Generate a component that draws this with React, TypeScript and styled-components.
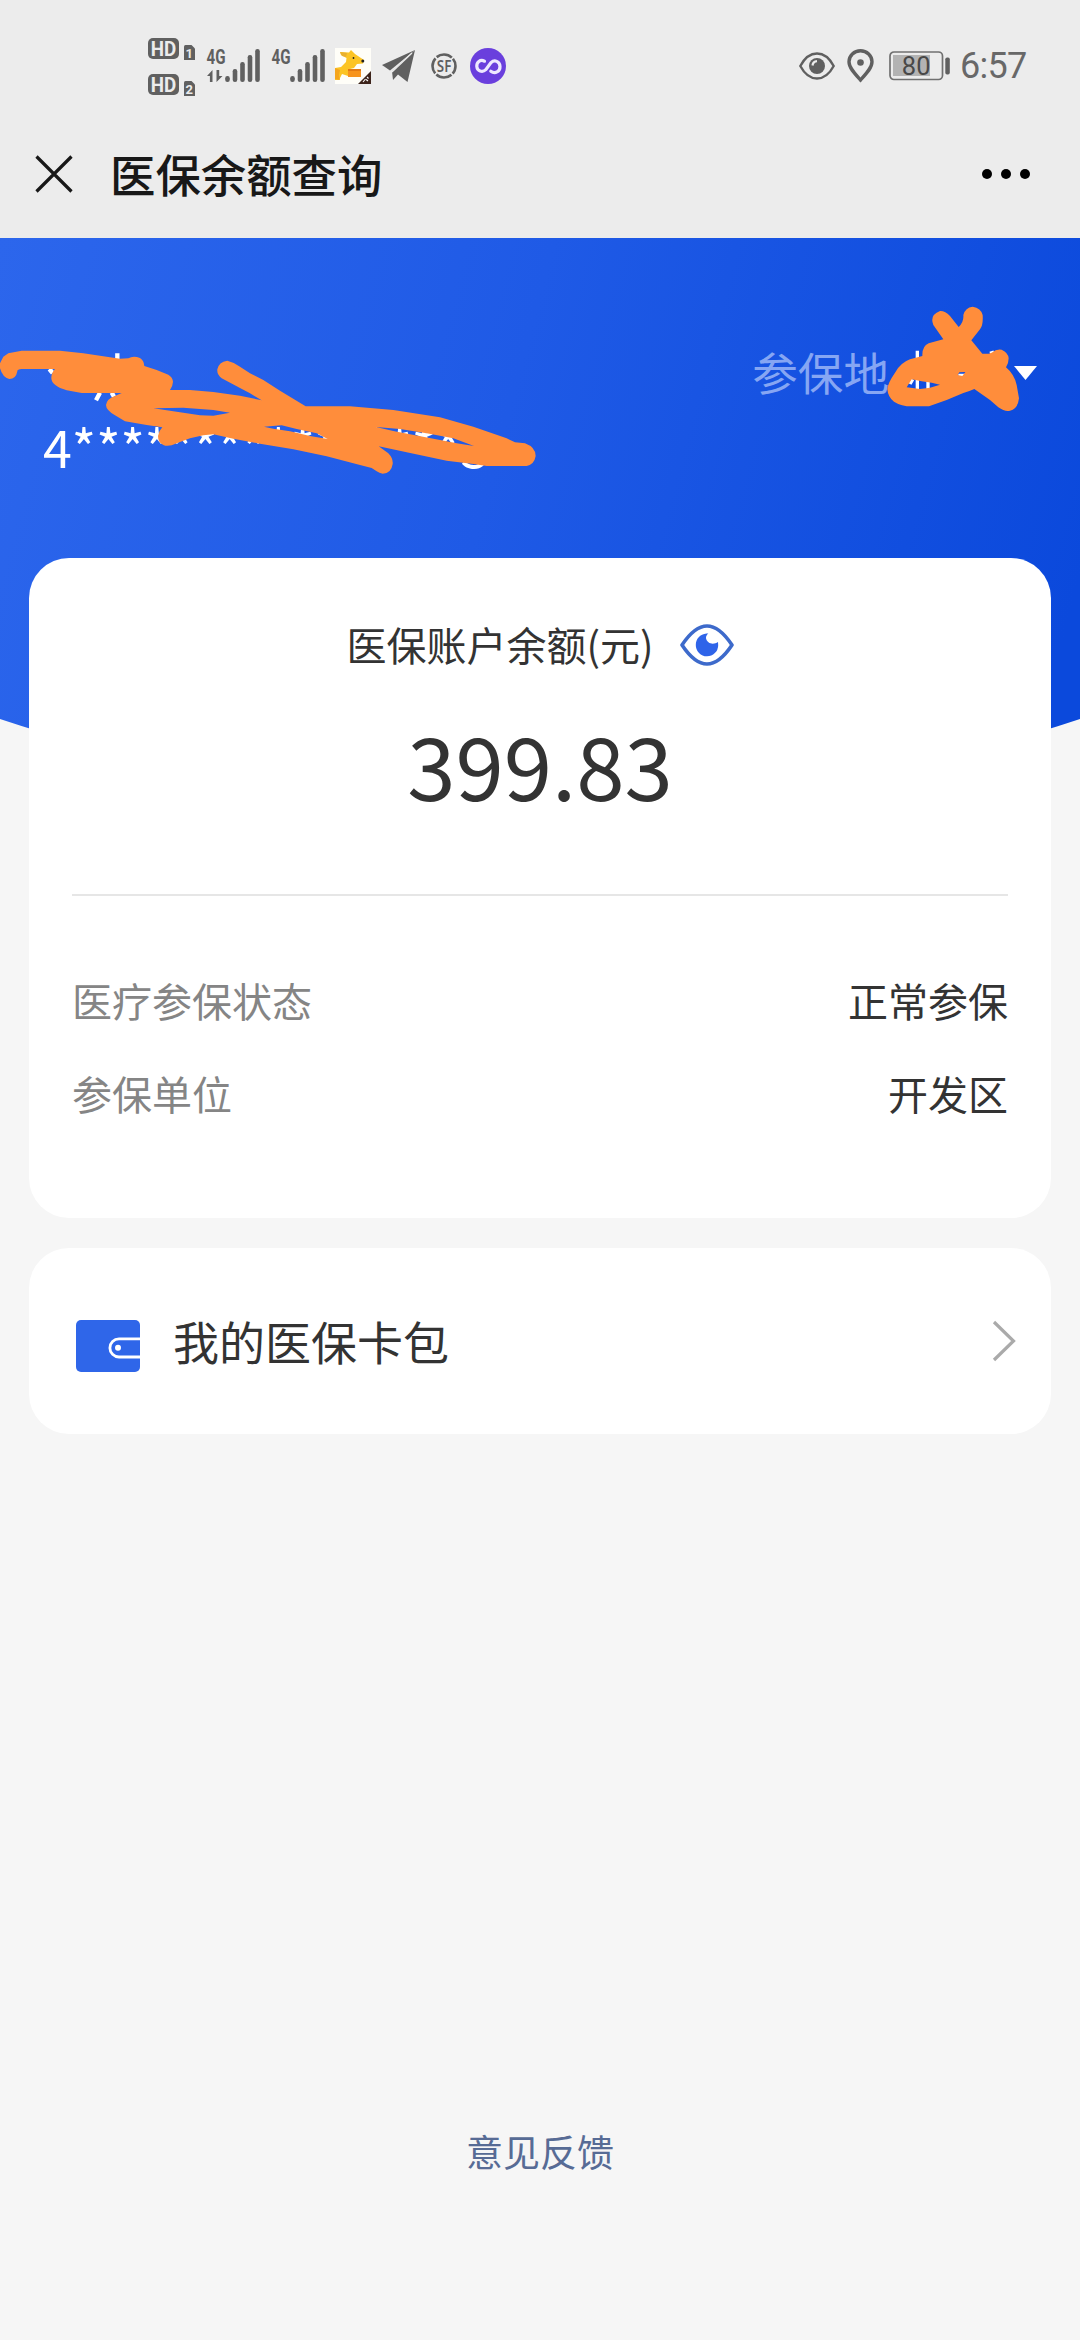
import React from "react";
import styled, { createGlobalStyle } from "styled-components";

const GlobalStyle = createGlobalStyle`
  * { box-sizing: border-box; }
  body {
    margin: 0;
    background: #f6f6f6;
    font-family: "Noto Sans CJK SC", "Noto Sans", sans-serif;
    color: #333;
  }
  svg { display: block; flex: none; }
`;

const Page = styled.div`
  width: 1080px;
  height: 2340px;
  display: flex;
  flex-direction: column;
  overflow: hidden;
  background: #f6f6f6;
`;

const StatusBar = styled.div`
  height: 132px;
  padding: 0 52px 0 148px;
  display: flex;
  align-items: center;
  justify-content: space-between;
  background: #ececec;
  color: #606060;
`;

const StatusGroup = styled.div<{ $gap: number }>`
  display: flex;
  align-items: center;
  gap: ${(p) => p.$gap}px;
`;

const Clock = styled.span`
  width: 68px;
  margin-left: -2px;
  font: 400 36px/72px Roboto, sans-serif;
  letter-spacing: -0.7px;
  color: #686868;
`;

const NavBar = styled.header`
  height: 106px;
  padding: 0 49px 20px 35px;
  display: flex;
  align-items: center;
  background: #ececec;
`;

const NavTitle = styled.h1`
  flex: 1;
  margin: 0 0 0 37px;
  padding-bottom: 5px;
  font-size: 45.4px;
  font-weight: 500;
  line-height: 60px;
  color: #181818;
`;

const Hero = styled.section`
  position: relative;
  height: 570px;
  margin-bottom: -250px;
  padding: 105px 43px 0;
  display: flex;
  justify-content: space-between;
  background: linear-gradient(105deg, #2c66ec 0%, #1f5ae6 45%, #0b49dc 95%);
  clip-path: circle(1708px at 540px -1139.5px);
  color: #fff;
`;

const IdNumber = styled.div`
  padding-top: 73px;
  font-size: 52px;
  line-height: 60px;
`;

const Region = styled.div`
  display: flex;
  align-items: center;
  gap: 125px;
  height: 60px;
  font-size: 45.6px;
  color: #86a6f3;
`;

const RegionLabel = styled.span`
  line-height: 60px;
  padding-bottom: 5px;
`;

const Overlay = styled.svg<{ $x: number; $y: number }>`
  position: absolute;
  left: ${(p) => p.$x}px;
  top: ${(p) => p.$y}px;
`;

const Cards = styled.main`
  position: relative;
  display: flex;
  flex-direction: column;
  gap: 30px;
  padding: 0 29px;
`;

const Card = styled.section`
  background: #fff;
  border-radius: 40px;
`;

const BalanceCard = styled(Card)`
  height: 660px;
  padding: 57px 43px 0;
`;

const BalanceLabel = styled.div`
  display: flex;
  justify-content: center;
  align-items: center;
  gap: 26px;
  height: 60px;
  font-size: 40px;
`;

const LabelText = styled.span`
  line-height: 58px;
  padding-bottom: 2px;
`;

const Amount = styled.div`
  height: 221px;
  padding-top: 28px;
  text-align: center;
  font-size: 87px;
  line-height: 120px;
  border-bottom: 2px solid #e6e6e6;
`;

const Details = styled.dl`
  margin: 0;
  padding-top: 57px;
`;

const DetailRow = styled.div`
  display: flex;
  align-items: center;
  justify-content: space-between;
  height: 93px;
  font-size: 40px;
`;

const Term = styled.dt`
  color: #858585;
`;

const Value = styled.dd`
  margin: 0;
`;

const WalletCard = styled(Card)`
  height: 186px;
  padding: 0 35px 0 47px;
  display: flex;
  align-items: center;
`;

const WalletTitle = styled.span`
  flex: 1;
  margin-left: 33px;
  padding-bottom: 3px;
  font-size: 46px;
`;

const Feedback = styled.a`
  margin-top: auto;
  padding-bottom: 159px;
  text-align: center;
  font-size: 37px;
  line-height: 60px;
  color: #576b95;
`;

const HdBadges = () => (
  <svg width="48" height="72" viewBox="148 30 48 72">
    {[38, 74].map((y, i) => (
      <g key={y}>
        <rect x="148" y={y} width="31" height="21" rx="5" fill="#606060" />
        <text x="150.8" y={y + 17.6} fontFamily="Roboto" fontWeight="700" fontSize="19.5" textLength="25.5" lengthAdjust="spacingAndGlyphs" fill="#ececec">HD</text>
        <path d={`M185.500 ${y + 7}h6l3.500 3.500v11.500h-11v-13.500q0-1.500 1.500-1.500z`} fill="#606060" />
        <text x="189.300" y={y + 19.500} textAnchor="middle" fontFamily="Roboto" fontWeight="700" fontSize="13" fill="#ececec">{i + 1}</text>
      </g>
    ))}
  </svg>
);

const Signal = ({ data }: { data?: boolean }) => (
  <svg width={data ? 54 : 52} height="72" viewBox={`207 30 ${data ? 54 : 52} 72`} fill="#606060" overflow="visible">
    <text x="206.500" y="64" fontFamily="Roboto" fontWeight="700" fontSize="20.500" textLength="19" lengthAdjust="spacingAndGlyphs">4G</text>
    {data && <path d="M212.500 70v12h-2.600v-6h-2.900zM216.500 70v12l6-6h-3.300v-6z" />}
    {[76, 69, 62, 55, 49].map((y, i) => (
      <rect key={y} x={225.200 + i * 7.500} y={y} width="4.600" height={82 - y} rx="2.200" />
    ))}
  </svg>
);

const DogIcon = () => (
  <svg width="36" height="36" viewBox="0 0 36 36">
    <rect width="36" height="36" fill="#fffef8" />
    <path d="M5 4l9 .5L16 2l4 4 9 6-1 3.500-6 .5-3 4-4 1-2 7-6-2-3 6H0V20l6-1 5-5 .5-4L6 7z" fill="#fcc424" />
    <path d="M0 20l5 2-1 5 1 5-5-1z" fill="#f5a51d" />
    <path d="M5 4l7 1-1 4-4-1z" fill="#e8b030" />
    <rect x="13" y="21" width="13" height="8" fill="#f7941d" />
    <path d="M13 21h13v2H13z" fill="#e27a13" />
    <circle cx="18.500" cy="10" r=".9" fill="#222" />
    <circle cx="27.800" cy="13" r="1.500" fill="#222" />
    <path d="M36 23v13H23z" fill="#3d241b" />
    <path d="M28 34l2.500-3M31 31.500l2 1.500M32 29l1.500 1.500" stroke="#fff" strokeWidth="1.100" />
  </svg>
);

const PlaneIcon = () => (
  <svg width="33" height="32" viewBox="0 0 33 32" fill="#606060">
    <path d="M33 0L0 15l8 5.500z" />
    <path d="M33 0L10 21.500l1 8.500 5-5.500L25.500 32z" />
    <path d="M30 3L10 22" stroke="#ececec" strokeWidth="1.200" />
  </svg>
);

const SfIcon = () => (
  <svg width="33" height="26" viewBox="-5 0 33 26">
    <circle cx="13" cy="13" r="11.500" fill="none" stroke="#606060" strokeWidth="2.600" strokeDasharray="16.460 1.600" strokeDashoffset="8.230" />
    <text x="5.800" y="18.800" fontFamily="Noto Sans" fontWeight="600" fontSize="16.500" textLength="14.500" lengthAdjust="spacingAndGlyphs" fill="#606060">SF</text>
  </svg>
);

const LoopIcon = () => (
  <svg width="36" height="36" viewBox="0 0 36 36">
    <circle cx="18" cy="18" r="18" fill="#6a3fdd" />
    <path d="M14.500 13.200C10 11 6.500 14.500 6.800 18.500c.4 4.500 5.500 6.500 9 3.200L21 14.600c3.500-3.300 8.800-1.300 9 3.900.2 5-5 7.800-9.200 4.700" fill="none" stroke="#eee8ff" strokeWidth="3.200" strokeLinecap="round" />
  </svg>
);

const StatusEye = () => (
  <svg width="36" height="28" viewBox="0 0 36 28">
    <path d="M1.300 14Q8 1.500 18 1.500T34.700 14Q28 26.500 18 26.500T1.300 14z" fill="none" stroke="#606060" strokeWidth="2.400" />
    <circle cx="18" cy="14" r="8" fill="#606060" />
    <path d="M13.500 13.500q.5-4 4.500-4.300" stroke="#ececec" strokeWidth="2.200" fill="none" />
  </svg>
);

const PinIcon = () => (
  <svg width="30" height="34" viewBox="0 0 30 34">
    <path d="M13.500 31C8 25 2 19 2 12.800a11.500 11 0 0 1 23 0C25 19 19 25 13.500 31z" fill="none" stroke="#606060" strokeWidth="3.400" />
    <circle cx="13.500" cy="13.500" r="3.300" fill="#606060" />
  </svg>
);

const Battery = () => (
  <svg width="61" height="30" viewBox="0 0 61 30">
    <rect x="1" y="1" width="52.500" height="27.500" rx="4" fill="none" stroke="#707070" strokeWidth="1.700" />
    <rect x="4" y="4" width="37" height="21" fill="#b3b3b3" />
    <text x="27.200" y="24" textAnchor="middle" fontFamily="Roboto" fontSize="25.500" fill="#484848">80</text>
    <rect x="56.300" y="6.500" width="4.500" height="17" rx="1.800" fill="#606060" />
  </svg>
);

const CloseIcon = () => (
  <svg width="38" height="40" viewBox="0 0 38 40">
    <path d="M1.500 1.500l35 35M36.500 1.500l-35 35" stroke="#181818" strokeWidth="3.200" />
  </svg>
);

const MoreIcon = () => (
  <svg width="50" height="16" viewBox="0 0 50 16" fill="#000">
    <circle cx="6" cy="7" r="5" />
    <circle cx="25" cy="7" r="5" />
    <circle cx="44" cy="7" r="5" />
  </svg>
);

const Caret = () => (
  <svg width="23" height="14" viewBox="0 0 23 14">
    <path d="M0 0h23L11.500 14z" fill="#fff" />
  </svg>
);

const BalanceEye = () => (
  <svg width="54" height="42" viewBox="0 0 54 42">
    <path d="M2 21C8 12 16 2 27 2s19 10 25 19C46 30 38 40 27 40S8 30 2 21z" fill="none" stroke="#3d6acb" strokeWidth="3.600" strokeLinejoin="round" />
    <path d="M26.500 9.500C20 10 15.800 15 15.800 21a11.200 11.200 0 0 0 22.400.2l-.2-3.200c-3 2-7 2.300-9.500.2-3-2.500-3.500-6-.2-8.700z" fill="#2f64e9" />
  </svg>
);

const WalletIcon = () => (
  <svg width="64" height="62" viewBox="0 -10 64 62">
    <rect width="64" height="52" rx="5" fill="#2f66e9" />
    <path d="M64 18.800H43a9.100 9.100 0 0 0 0 18.200h21" fill="none" stroke="#fff" strokeWidth="2.800" />
    <circle cx="42" cy="27.800" r="3" fill="#fff" />
  </svg>
);

const Chevron = () => (
  <svg width="24" height="42" viewBox="0 0 24 42">
    <path d="M2 2l19.500 19L2 40" fill="none" stroke="#aaa" strokeWidth="3.200" />
  </svg>
);

const NameScribble = () => (
  <Overlay $x={0} $y={92} width="540" height="170" viewBox="0 0 1620 510">
    <path d="M148 117l10 12M352 70v20M300 188l-12 23M335 188l7 12" stroke="#fff" strokeWidth="13" />
    <path
      fillRule="evenodd"
      fill="#ff8d3b"
      d="M0 100L10 80 25 70 65 62H180L250 70 330 82 360 86 385 85Q400 76 420 84 432 92 433 108L470 120 505 134Q518 142 519 155 518 170 510 180L570 180 640 186 720 197 785 211 750 190 720 174 665 145Q650 132 652 118 656 96 682 92 700 96 720 110L750 130 790 150 840 182 917 229H1050L1180 240 1320 262 1420 290 1520 325 1545 337 1575 340Q1607 352 1607 378 1603 403 1580 408H1460L1420 402 1340 392 1220 367 1136 349 1165 370Q1180 386 1178 402 1174 430 1148 431 1138 430 1130 424L1115 414 1080 405 980 379 880 358 780 341 700 326 640 313 610 316 570 325 530 340Q505 352 490 345 474 338 474 318 476 303 487 292L440 285 375 274 345 256Q318 240 318 225 321 206 345 198L365 189H245L200 181Q155 168 154 145 154 128 165 117H65Q51 118 52 124 48 147 28 147 8 143 0 115z
      M460 235L550 233 640 240 690 248 640 257 600 256 530 245z
      M792 290L845 286 890 297 950 310 983 327 930 318 870 304 820 296z
      M1128 291L1200 297 1280 310 1360 325 1422 348 1370 340 1320 330 1230 313 1180 303z"
    />
  </Overlay>
);

const RegionScribble = () => (
  <Overlay $x={730} $y={52} width="350" height="140" viewBox="0 0 1050 420">
    <path d="M562 182V297M594 270V297M540 282l8-14M685 256h20M780 190l12-4" stroke="#fff" strokeWidth="10" />
    <path
      fillRule="evenodd"
      fill="#ff8d3b"
      d="M472 297Q473 280 495 248 512 218 540 208L577 198Q576 168 596 160L640 148 610 105Q598 75 630 63 645 62 660 78L686 111Q702 96 700 75 706 52 728 50 753 54 758 75 760 105 750 118L724 151 757 191Q773 193 785 188 800 176 815 179 835 188 836 205 836 220 828 232 853 253 860 285L867 325Q864 357 840 362 825 366 805 352L780 330 733 297Q720 303 700 309L650 330 597 349H550Q515 350 492 335 474 322 472 297z
      M530 292L545 268 575 274 605 278 630 284 600 293 570 297z
      M683 255L688 247 706 246 697 258z"
    />
  </Overlay>
);

const details = [
  { term: "医疗参保状态", value: "正常参保" },
  { term: "参保单位", value: "开发区" },
];

export default function App() {
  return (
    <Page>
      <GlobalStyle />
      <StatusBar>
        <StatusGroup $gap={11}>
          <HdBadges />
          <Signal data />
          <Signal />
          <DogIcon />
          <PlaneIcon />
          <SfIcon />
          <LoopIcon />
        </StatusGroup>
        <StatusGroup $gap={12}>
          <StatusEye />
          <PinIcon />
          <Battery />
          <Clock>6:57</Clock>
        </StatusGroup>
      </StatusBar>
      <NavBar>
        <CloseIcon />
        <NavTitle>医保余额查询</NavTitle>
        <MoreIcon />
      </NavBar>
      <Hero>
        <IdNumber>4****************3</IdNumber>
        <Region>
          <RegionLabel>参保地</RegionLabel>
          <Caret />
        </Region>
        <NameScribble />
        <RegionScribble />
      </Hero>
      <Cards>
        <BalanceCard>
          <BalanceLabel>
            <LabelText>医保账户余额(元)</LabelText>
            <BalanceEye />
          </BalanceLabel>
          <Amount>399.83</Amount>
          <Details>
            {details.map((d) => (
              <DetailRow key={d.term}>
                <Term>{d.term}</Term>
                <Value>{d.value}</Value>
              </DetailRow>
            ))}
          </Details>
        </BalanceCard>
        <WalletCard>
          <WalletIcon />
          <WalletTitle>我的医保卡包</WalletTitle>
          <Chevron />
        </WalletCard>
      </Cards>
      <Feedback>意见反馈</Feedback>
    </Page>
  );
}
